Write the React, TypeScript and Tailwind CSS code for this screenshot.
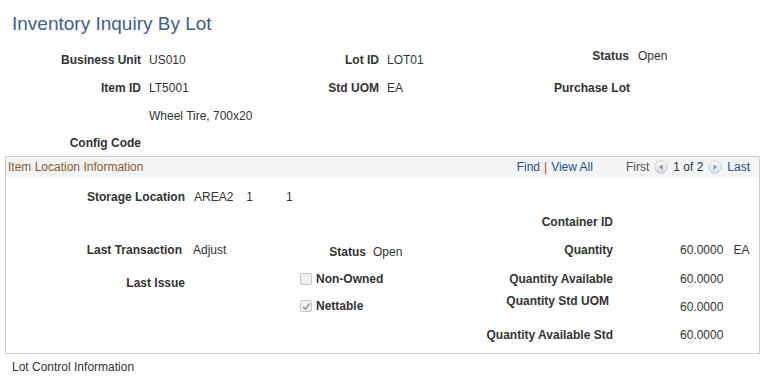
import React from 'react';

const Label = ({ children, className = '' }: { children?: React.ReactNode; className?: string }) => (
  <div className={`font-bold text-[#333] text-right ${className}`}>{children}</div>
);

const Box = ({ checked }: { checked?: boolean }) => (
  <span className="inline-flex w-[12px] h-[12px] items-center justify-center border border-[#c6c6c6] rounded-[2px] bg-[#f0f0f0]">
    {checked && (
      <svg width="9" height="9" viewBox="0 0 9 9">
        <path d="M1.2 4.8 L3.4 7 L7.8 1.6" stroke="#9a9a9a" strokeWidth="1.6" fill="none" />
      </svg>
    )}
  </span>
);

const NavIcon = ({ dir }: { dir: 'left' | 'right' }) => (
  <svg width="14" height="14" viewBox="0 0 14 14" className="mx-[5px]">
    <defs>
      <linearGradient id={`g-${dir}`} x1="0" y1="0" x2="0" y2="1">
        <stop offset="0" stopColor="#fdfdfd" />
        <stop offset="1" stopColor="#d6d9dd" />
      </linearGradient>
    </defs>
    <circle cx="7" cy="7" r="6.3" fill={`url(#g-${dir})`} stroke="#c3c7cc" strokeWidth="0.8" />
    {dir === 'left' ? (
      <path d="M8.6 4.2 L5.2 7 L8.6 9.8 Z" fill="#8a8a8a" />
    ) : (
      <path d="M5.6 4.2 L9 7 L5.6 9.8 Z" fill="#6e9ad0" />
    )}
  </svg>
);

export default function App() {
  return (
    <div className="w-[768px] h-[382px] bg-white font-['Liberation_Sans',Arial,sans-serif] text-[12px] text-[#333] overflow-hidden">
      <h1 className="pt-[12px] pl-[12px] mb-[10px] text-[19px] leading-[24px] text-[#3e5f8d]">Inventory Inquiry By Lot</h1>

      {/* header fields */}
      <div className="flex h-[28px] items-center">
        <Label className="w-[141px]">Business Unit</Label>
        <div className="ml-[8px] w-[130px]">US010</div>
        <Label className="w-[100px]">Lot ID</Label>
        <div className="ml-[8px] w-[140px]">LOT01</div>
        <div className="flex items-center mb-[8px]">
          <Label className="w-[102px]">Status</Label>
          <div className="ml-[9px]">Open</div>
        </div>
      </div>
      <div className="flex h-[28px] items-center">
        <Label className="w-[141px]">Item ID</Label>
        <div className="ml-[8px] w-[130px]">LT5001</div>
        <Label className="w-[100px]">Std UOM</Label>
        <div className="ml-[8px] w-[140px]">EA</div>
        <Label className="w-[103px]">Purchase Lot</Label>
      </div>
      <div className="flex h-[28px] items-center">
        <div className="ml-[149px]">Wheel Tire, 700x20</div>
      </div>
      <div className="flex h-[26px] items-center">
        <Label className="w-[141px]">Config Code</Label>
      </div>

      {/* Item Location group */}
      <div className="ml-[5px] w-[755px] border border-[#cbd0d6]">
        <div className="flex h-[20px] items-center justify-between bg-[#f2f4f6] pl-[2px] pr-[9px]">
          <span className="text-[#94592a]">Item Location Information</span>
          <div className="flex items-center">
            <span className="text-[#24508c]">Find</span>
            <span className="mx-[4px] text-[#c0392b]">|</span>
            <span className="text-[#24508c]">View All</span>
            <span className="ml-[33px] text-[#555]">First</span>
            <NavIcon dir="left" />
            <span>1 of 2</span>
            <NavIcon dir="right" />
            <span className="text-[#24508c]">Last</span>
          </div>
        </div>

        <div className="pt-[8px] pb-[2px]">
          <div className="flex h-[24px] items-center">
            <Label className="w-[179px]">Storage Location</Label>
            <div className="ml-[9px] flex">
              <span>AREA2</span>
              <span className="ml-[13px]">1</span>
              <span className="ml-[33px]">1</span>
            </div>
          </div>
          <div className="flex h-[26px] items-center">
            <Label className="ml-[454px] w-[153px]">Container ID</Label>
          </div>
          <div className="flex h-[30px] items-center">
            <Label className="w-[176px]">Last Transaction</Label>
            <div className="ml-[11px] w-[107px]">Adjust</div>
            <Label className="w-[66px] pt-[3px]">Status</Label>
            <div className="ml-[7px] w-[87px] pt-[3px]">Open</div>
            <Label className="w-[153px]">Quantity</Label>
            <div className="ml-[67px]">60.0000</div>
            <div className="ml-[10px]">EA</div>
          </div>
          <div className="flex h-[28px] items-center">
            <Label className="w-[179px] pt-[8px]">Last Issue</Label>
            <div className="ml-[115px] w-[160px] flex items-center">
              <Box />
              <span className="ml-[4px] font-bold">Non-Owned</span>
            </div>
            <Label className="w-[153px]">Quantity Available</Label>
            <div className="ml-[67px]">60.0000</div>
          </div>
          <div className="flex h-[26px] items-center">
            <div className="ml-[294px] w-[160px] flex items-center">
              <Box checked />
              <span className="ml-[4px] font-bold">Nettable</span>
            </div>
            <Label className="w-[149px] pb-[10px]">Quantity Std UOM</Label>
            <div className="ml-[71px] pt-[2px]">60.0000</div>
          </div>
          <div className="flex h-[32px] items-center">
            <Label className="ml-[454px] w-[153px]">Quantity Available Std</Label>
            <div className="ml-[67px]">60.0000</div>
          </div>
        </div>
      </div>

      <div className="mt-[6px] ml-[12px] leading-[14px]">Lot Control Information</div>
    </div>
  );
}
